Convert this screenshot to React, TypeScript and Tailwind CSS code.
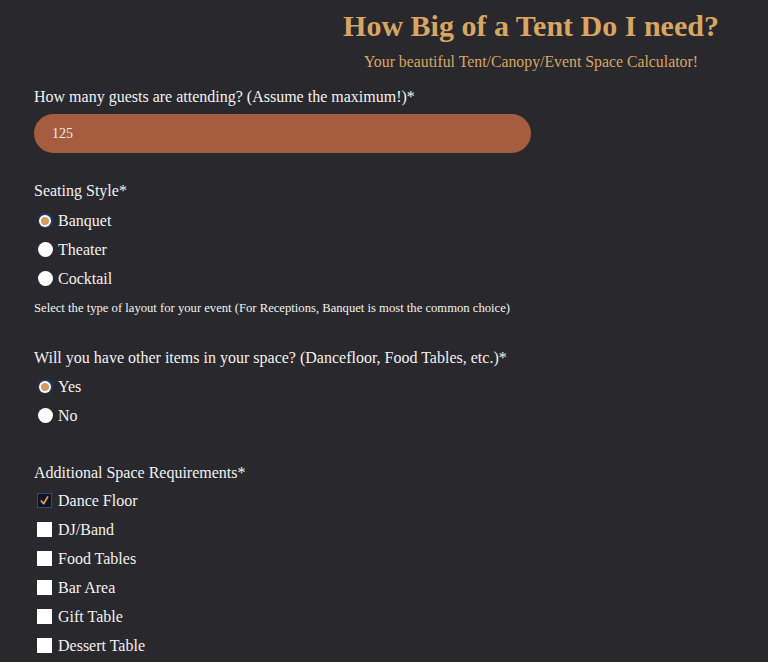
import React from "react";

const serif = { fontFamily: '"Liberation Serif", "Times New Roman", serif' };

function Radio({ label, checked }: { label: string; checked?: boolean }) {
  return (
    <div className="flex items-center h-[29px]">
      <span className="w-[24px] flex justify-center ml-[-1px]">
        {checked ? (
          <span className="w-[15px] h-[15px] rounded-full bg-[#1d3b6b] flex items-center justify-center">
            <span className="w-[12px] h-[12px] rounded-full bg-white flex items-center justify-center">
              <span className="w-[8px] h-[8px] rounded-full bg-[#d39c5c]" />
            </span>
          </span>
        ) : (
          <span className="w-[15px] h-[15px] rounded-full bg-white" />
        )}
      </span>
      <span className="text-[16px] text-[#f2f2f2] ml-[1px]">{label}</span>
    </div>
  );
}

function Check({ label, checked }: { label: string; checked?: boolean }) {
  return (
    <div className="flex items-center h-[29px]">
      <span className="w-[24px] flex justify-center ml-[-2px]">
        {checked ? (
          <span className="w-[15px] h-[15px] bg-[#121521] border border-[#2a4a8a] flex items-center justify-center">
            <svg width="11" height="11" viewBox="0 0 12 12">
              <path d="M2.5 6.5 L5 9.5 L9.5 2" fill="none" stroke="#e3a75c" strokeWidth="1.8" strokeLinecap="round" strokeLinejoin="round" />
            </svg>
          </span>
        ) : (
          <span className="w-[15px] h-[15px] bg-white" />
        )}
      </span>
      <span className="text-[16px] text-[#f2f2f2] ml-[2px]">{label}</span>
    </div>
  );
}

export default function App() {
  return (
    <div className="w-[768px] h-[662px] bg-[#29282d] overflow-hidden" style={serif}>
      <div className="flex justify-end">
        <div className="w-[474px] text-center pt-[8px]">
          <h1 className="text-[30px] font-bold text-[#d8a662] leading-[36px]">How Big of a Tent Do I need?</h1>
          <p className="text-[15.8px] text-[#d8a662] mt-[8px] leading-[20px]">Your beautiful Tent/Canopy/Event Space Calculator!</p>
        </div>
      </div>
      <div className="px-[34px]">
        <div className="text-[16px] text-[#f2f2f2] mt-[15px] leading-[20px]">How many guests are attending? (Assume the maximum!)*</div>
        <div className="mt-[7px] w-[497px] h-[39px] rounded-full bg-[#a65c3e] flex items-center px-[18px] text-[14px] text-[#f5eee8]">125</div>

        <div className="text-[16px] text-[#f2f2f2] mt-[28px] leading-[20px]">Seating Style*</div>
        <div className="mt-[5px]">
          <Radio label="Banquet" checked />
          <Radio label="Theater" />
          <Radio label="Cocktail" />
        </div>
        <div className="text-[12.65px] text-[#f2f2f2] leading-[18px] mt-[6px]">Select the type of layout for your event (For Receptions, Banquet is most the common choice)</div>

        <div className="text-[16px] text-[#f2f2f2] mt-[31px] leading-[20px]">Will you have other items in your space? (Dancefloor, Food Tables, etc.)*</div>
        <div className="mt-[4px]">
          <Radio label="Yes" checked />
          <Radio label="No" />
        </div>

        <div className="text-[16px] text-[#f2f2f2] mt-[33px] leading-[20px]">Additional Space Requirements*</div>
        <div className="mt-[3px]">
          <Check label="Dance Floor" checked />
          <Check label="DJ/Band" />
          <Check label="Food Tables" />
          <Check label="Bar Area" />
          <Check label="Gift Table" />
          <Check label="Dessert Table" />
        </div>
      </div>
    </div>
  );
}
